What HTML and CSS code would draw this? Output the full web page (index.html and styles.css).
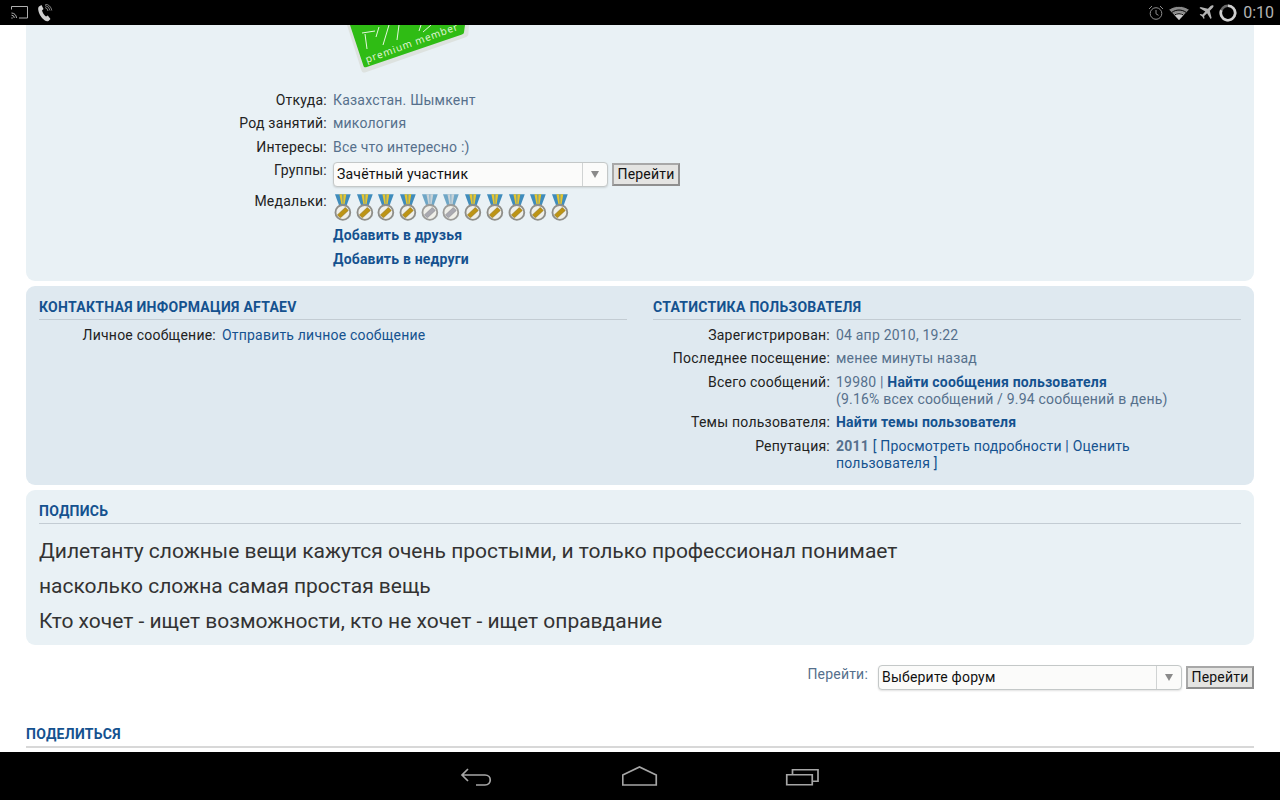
FILE: index.html
```html
<!DOCTYPE html>
<html lang="ru">
<head>
    <meta charset="UTF-8">
    <title>Профиль пользователя</title>
    <link rel="stylesheet" href="styles.css">
</head>
<body>
    <svg class="defs" width="0" height="0">
        <symbol id="medal-gold" viewBox="0 0 22 27">
            <path d="M2 0h16l-4 11H6z" fill="#3f8cbc"/>
            <path d="M6.500 0h3l.4 10H8.500zM10.500 0h3l-1.700 10h-1.400z" fill="#e6c52e"/>
            <circle cx="10" cy="18.500" r="7.500" fill="#efefe9" stroke="#8f8f8a" stroke-width="1.900"/>
            <path d="M4.500 21 12.500 13.500l3 3-8 7.500z" fill="#bd9414" stroke="#8c6d10" stroke-width=".6"/>
        </symbol>
        <symbol id="medal-silver" viewBox="0 0 22 27">
            <path d="M2 0h16l-4 11H6z" fill="#6ea6c6"/>
            <path d="M6.500 0h3l.4 10H8.500zM10.500 0h3l-1.700 10h-1.400z" fill="#c9d3d8"/>
            <circle cx="10" cy="18.500" r="7.500" fill="#efefe9" stroke="#9c9c99" stroke-width="1.900"/>
            <path d="M4.500 21 12.500 13.500l3 3-8 7.500z" fill="#a9a9b0" stroke="#85858c" stroke-width=".6"/>
        </symbol>
    </svg>

    <div class="status-bar">
        <div class="status-left">
            <svg width="17" height="13" viewBox="0 0 17 13" fill="none" stroke="#b0b0b0" stroke-width="1">
                <path d="M.5 3.500V.5h16v11.500H8"/>
                <path d="M.5 7a5 5 0 0 1 5 5M.5 9.200a2.800 2.800 0 0 1 2.800 2.800"/>
                <circle cx="1" cy="12" r=".7" fill="#b0b0b0" stroke="none"/>
            </svg>
            <svg width="16" height="18" viewBox="0 0 16 18" fill="none">
                <path d="M2 2.500 4.500 1l2 4-1.500 1.500c.5 2 2 4.500 4 6l1.800-1 2.700 3.500-2 2c-1 .6-2.600.4-4-.8C4 13.500 1.500 9 1.200 5.500c-.1-1.300.2-2.400.8-3z" fill="#cfcfcf"/>
                <path d="M8 3.500a4 4 0 0 1 3 3.500M8 1.500a6 6 0 0 1 5 5M8 0a8 8 0 0 1 6.800 6.500" stroke="#a0a0a0" stroke-width=".8"/>
            </svg>
        </div>
        <div class="status-right">
            <svg width="16" height="16" viewBox="0 0 16 16" fill="none" stroke="#8f8f8f" stroke-width="1">
                <circle cx="8" cy="8.500" r="5.800"/>
                <path d="M8 5v3.800l2.500 1.500M1 4l3-3M15 4l-3-3"/>
            </svg>
            <svg width="20" height="14" viewBox="0 0 20 14">
                <path d="M10 14 0 3.500C5.500-1 14.500-1 20 3.500z" fill="#8a8a8a"/>
                <path d="M10 14 5 8.500C8 6 12 6 15 8.500z" fill="#c8c8c8"/>
                <path d="M.5 3.200C5.500-.7 14.500-.7 19.500 3.200M3 6.300c4-3 10-3 14 0M5.600 9c2.500-1.700 6.300-1.700 8.800 0" fill="none" stroke="#000" stroke-width="1"/>
            </svg>
            <svg class="plane" width="16" height="15" viewBox="0 0 16 15">
                <path d="M15.500.5c-.8-.7-2-.3-2.900.6L9.900 3.800 2.500 2 1.500 3l5.800 3.500-2.700 3-2.200-.4-.7.7 2.500 1.600 1.600 2.500.7-.7-.4-2.200 3-2.700 3.500 5.800 1-1-1.800-7.400 2.700-2.700c.9-.9 1.400-1.800.7-2.500z" fill="#b4b4b4"/>
            </svg>
            <svg width="18" height="18" viewBox="0 0 18 18" fill="none" stroke-width="2.600">
                <circle cx="9" cy="9" r="7.200" stroke="#6a6a6a"/>
                <path d="M9 1.800A7.200 7.200 0 1 1 2.300 6.300" stroke="#d0d0d0"/>
            </svg>
            <span class="clock">0:10</span>
        </div>
    </div>

    <div class="content">
        <div class="panel panel-top">
            <svg class="badge" width="134" height="50" viewBox="0 0 134 50">
                <path d="M10 0 24.500 45.500c.6 1.800 1.800 2.500 3.500 1.900l100-35c2.500-.9 3.200-1.800 3.400-3.400L132 0z" fill="#dde2df"/>
                <path d="M13 0 26.500 41c.4 1.200 1.300 1.600 2.500 1.200l96-32.700c1.200-.4 1.800-1 2-2.200L128 0z" fill="#2fbc14"/>
                <path d="M25 8l13-2M28 9l2 15M42 2l-3 10M52 0l-6 20M62 0l-2 15M84 0l-2 6M94 0l-8 7" stroke="#e6f7df" stroke-width="1" fill="none"/>
                <text class="badge-text" transform="translate(30 38) rotate(-20)">premium member</text>
            </svg>
            <div class="info-row"><span class="info-label">Откуда:</span><span class="info-value">Казахстан. Шымкент</span></div>
            <div class="info-row"><span class="info-label">Род занятий:</span><span class="info-value">микология</span></div>
            <div class="info-row"><span class="info-label">Интересы:</span><span class="info-value">Все что интересно :)</span></div>
            <div class="info-row info-row-groups">
                <span class="info-label">Группы:</span>
                <div class="jump">
                    <div class="select select-groups"><span>Зачётный участник</span><i class="select-arrow"></i></div>
                    <button class="go-btn">Перейти</button>
                </div>
            </div>
            <div class="info-row info-row-medals">
                <span class="info-label">Медальки:</span>
                <div class="medals">
                    <svg class="medal"><use href="#medal-gold"/></svg>
                    <svg class="medal"><use href="#medal-gold"/></svg>
                    <svg class="medal"><use href="#medal-gold"/></svg>
                    <svg class="medal"><use href="#medal-gold"/></svg>
                    <svg class="medal"><use href="#medal-silver"/></svg>
                    <svg class="medal"><use href="#medal-silver"/></svg>
                    <svg class="medal"><use href="#medal-gold"/></svg>
                    <svg class="medal"><use href="#medal-gold"/></svg>
                    <svg class="medal"><use href="#medal-gold"/></svg>
                    <svg class="medal"><use href="#medal-gold"/></svg>
                    <svg class="medal"><use href="#medal-gold"/></svg>
                </div>
            </div>
            <div class="info-row info-row-link"><span class="info-label"></span><a class="strong-link" href="#">Добавить в друзья</a></div>
            <div class="info-row info-row-link"><span class="info-label"></span><a class="strong-link" href="#">Добавить в недруги</a></div>
        </div>

        <div class="panel panel-contacts">
            <div class="contact-col">
                <h3 class="section-title">Контактная информация Aftaev</h3>
                <div class="stat-row"><span class="stat-label">Личное сообщение:</span><a class="link" href="#">Отправить личное сообщение</a></div>
            </div>
            <div class="contact-col">
                <h3 class="section-title">Статистика пользователя</h3>
                <div class="stat-row"><span class="stat-label">Зарегистрирован:</span><span class="stat-value">04 апр 2010, 19:22</span></div>
                <div class="stat-row"><span class="stat-label">Последнее посещение:</span><span class="stat-value">менее минуты назад</span></div>
                <div class="stat-row"><span class="stat-label">Всего сообщений:</span><span class="stat-value">19980 | <a class="strong-link" href="#">Найти сообщения пользователя</a><br>(9.16% всех сообщений / 9.94 сообщений в день)</span></div>
                <div class="stat-row"><span class="stat-label">Темы пользователя:</span><a class="strong-link" href="#">Найти темы пользователя</a></div>
                <div class="stat-row"><span class="stat-label">Репутация:</span><div class="stat-value"><b>2011</b> <span class="link">[</span> <a class="link" href="#">Просмотреть подробности</a> <span class="link">|</span> <a class="link" href="#">Оценить</a> <a class="link" href="#">пользователя</a> <span class="link">]</span></div></div>
            </div>
        </div>

        <div class="panel panel-sign">
            <h3 class="section-title">Подпись</h3>
            <p class="sign-line">Дилетанту сложные вещи кажутся очень простыми, и только профессионал понимает</p>
            <p class="sign-line">насколько сложна самая простая вещь</p>
            <p class="sign-line">Кто хочет - ищет возможности, кто не хочет - ищет оправдание</p>
        </div>

        <div class="forum-jump">
            <span class="forum-jump-label">Перейти:</span>
            <div class="jump">
                <div class="select select-forum"><span>Выберите форум</span><i class="select-arrow"></i></div>
                <button class="go-btn">Перейти</button>
            </div>
        </div>

        <h3 class="section-title share-title">Поделиться</h3>
    </div>

    <div class="nav-bar">
        <svg width="36" height="22" viewBox="0 0 36 22" fill="none" stroke="#a6a6a6" stroke-width="1.700">
            <path d="M8 4 2 10l6 6M2 10h23c7 0 7 10 0 10h-9"/>
        </svg>
        <svg width="36" height="22" viewBox="0 0 36 22" fill="none" stroke="#a6a6a6" stroke-width="1.700">
            <path d="M.75 10 17.500 2l16.750 8v10H.75z"/>
        </svg>
        <svg width="36" height="22" viewBox="0 0 36 22" fill="none" stroke="#a6a6a6" stroke-width="1.700">
            <path d="M2.750 9.750h25.500v10H2.750zM8.500 9V4.750H34v11.500h-5.500"/>
        </svg>
    </div>
</body>
</html>
```

FILE: styles.css
```css
* {
    box-sizing: border-box;
}
html, body {
    margin: 0;
    height: 800px;
    overflow: hidden;
}
body {
    display: flex;
    flex-direction: column;
    background: white;
    font-family: Roboto, sans-serif;
    font-size: 14px;
    line-height: 17px;
    letter-spacing: .2px;
    color: #222;
}
.defs {
    position: absolute;
}
.status-bar {
    height: 25px;
    flex: none;
    background: #000;
    display: flex;
    justify-content: space-between;
    align-items: center;
    padding: 0 6px 0 11px;
    letter-spacing: 0;
}
.status-left, .status-right {
    display: flex;
    align-items: center;
}
.status-left {
    gap: 9px;
}
.status-right {
    gap: 5px;
}
.plane {
    margin-left: 4px;
}
.clock {
    margin-left: 1px;
    color: #b4b4b4;
    font-size: 16px;
}
.content {
    flex: 1;
    min-height: 0;
    overflow: hidden;
    padding: 0 26px;
}
.panel {
    background: #e9f1f5;
    border-radius: 9px;
}
.panel-top {
    height: 256px;
    border-radius: 0 0 9px 9px;
}
.badge {
    display: block;
    margin-left: 311px;
    margin-bottom: 16.600px;
}
.badge-text {
    font-family: "Open Sans", sans-serif;
    font-size: 10px;
    letter-spacing: .9px;
    fill: #e6f7df;
}
.info-row {
    display: grid;
    grid-template-columns: 301px 1fr;
    column-gap: 6px;
    height: 23.500px;
}
.info-label {
    text-align: right;
    letter-spacing: .24px;
    color: #222;
}
.info-value {
    color: #56708c;
}
.info-row-groups {
    height: 31px;
}
.info-row-medals {
    height: 34px;
}
.info-row-link {
    height: 24px;
}
.jump {
    display: flex;
    align-items: flex-start;
    gap: 4px;
}
.select {
    height: 25px;
    display: flex;
    align-items: center;
    justify-content: space-between;
    background: #fbfbfa;
    border: 1px solid #c4c8c8;
    border-radius: 4px;
    color: #111;
    padding-left: 3px;
    box-shadow: 0 1px 2px rgba(0,0,0,0.12);
}
.select-groups {
    width: 275px;
}
.select-forum {
    width: 304px;
}
.select-arrow {
    width: 25px;
    height: 100%;
    border-left: 1px solid #d0d3d3;
    position: relative;
}
.select-arrow::after {
    content: "";
    position: absolute;
    left: 8px;
    top: 8px;
    border-left: 4px solid transparent;
    border-right: 4px solid transparent;
    border-top: 7px solid #8a8a8a;
}
.go-btn {
    width: 68px;
    height: 23px;
    margin-top: 1px;
    padding: 0;
    border: 2px solid #8f8f8f;
    border-top-color: #a8a8a8;
    border-left-color: #a8a8a8;
    background: #e4e4e2;
    color: #111;
    font-family: Roboto, sans-serif;
    font-size: 14px;
    line-height: 17px;
    letter-spacing: .2px;
}
.medals {
    display: flex;
    margin-top: 1px;
}
.medal {
    width: 21.700px;
    height: 27px;
}
.strong-link {
    color: #15528f;
    font-weight: bold;
    text-decoration: none;
}
.link {
    color: #15528f;
    text-decoration: none;
}
.panel-contacts {
    margin-top: 5px;
    height: 199px;
    background: #dfe9f0;
    padding: 13px;
    display: grid;
    grid-template-columns: 588px 588px;
    column-gap: 26px;
}
.section-title {
    margin: 0 0 6px;
    font-size: 14px;
    line-height: 17px;
    font-weight: bold;
    letter-spacing: .28px;
    text-transform: uppercase;
    color: #15528f;
    border-bottom: 1px solid #c3ccd3;
    padding-bottom: 3px;
}
.stat-row {
    display: grid;
    grid-template-columns: 177px 340px;
    column-gap: 6px;
    padding: 0 0 6.400px;
}
.contact-col .stat-row:first-of-type {
    padding-top: 1px;
}
.stat-label {
    text-align: right;
    letter-spacing: .23px;
}
.stat-value {
    color: #56708c;
}
.stat-value b {
    font-weight: bold;
}
.panel-sign {
    margin-top: 5px;
    height: 155px;
    padding: 13px;
}
.panel-sign .section-title {
    margin-bottom: 10px;
}
.sign-line {
    margin: 0;
    font-size: 21px;
    line-height: 35px;
    letter-spacing: -.01px;
    color: #333;
}
.forum-jump {
    margin-top: 20px;
    height: 25px;
    display: flex;
    justify-content: flex-end;
    gap: 10px;
}
.forum-jump-label {
    padding-top: 1px;
    color: #56708c;
}
.share-title {
    margin: 36px 0 0;
    padding-bottom: 3px;
    border-bottom: 2px solid #d8d8d8;
}
.nav-bar {
    height: 48px;
    flex: none;
    background: #000;
    display: grid;
    grid-template-columns: 36px 36px 36px;
    column-gap: 126px;
    justify-content: center;
    align-items: center;
}
```
